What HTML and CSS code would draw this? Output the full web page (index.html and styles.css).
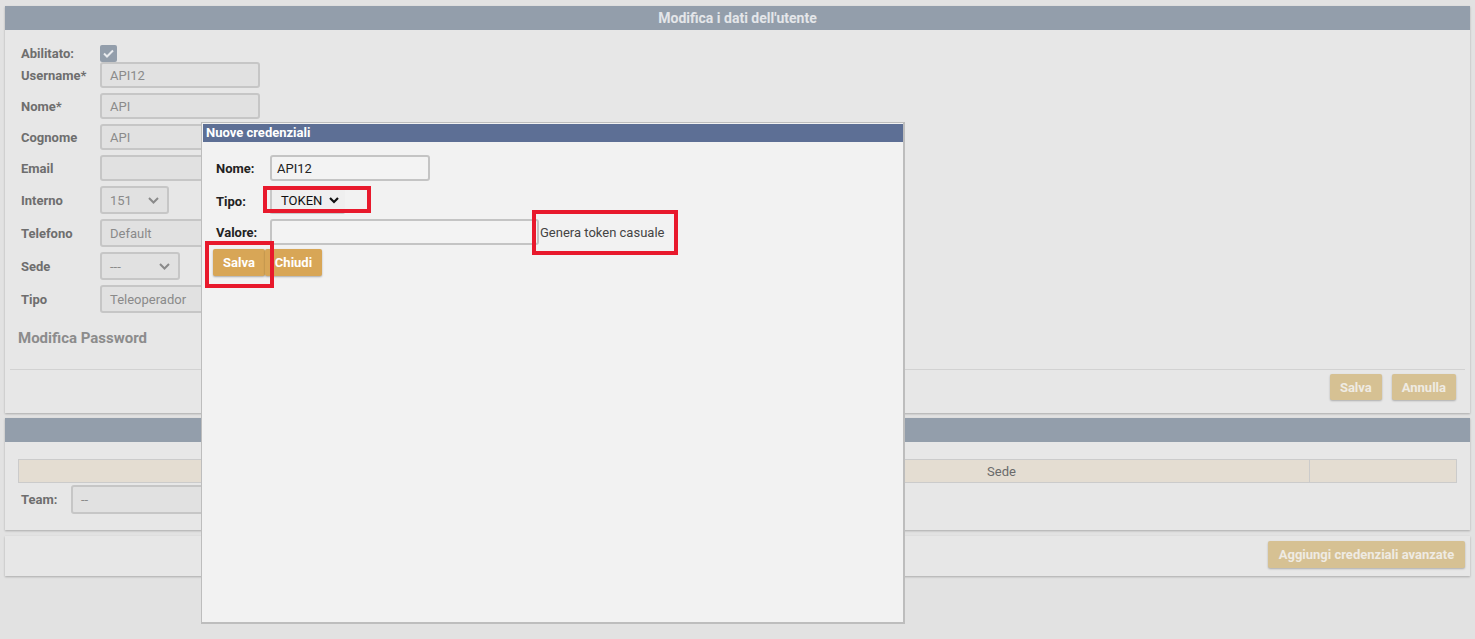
FILE: index.html
```html
<!DOCTYPE html>
<html lang="it">
<head>
  <meta charset="UTF-8">
  <title>Modifica utente</title>
  <link rel="stylesheet" href="styles.css">
</head>
<body>
  <div class="panel">
    <div class="panel-title">Modifica i dati dell'utente</div>
    <div class="user-form">
      <div class="row row-check">
        <label>Abilitato:</label>
        <span class="check">
          <svg width="11" height="9" viewBox="0 0 11 9"><path d="M1 4.5 L4 7.5 L10 1.5" fill="none" stroke="#e9ebee" stroke-width="2"/></svg>
        </span>
      </div>
      <div class="row"><label>Username*</label><div class="field w160">API12</div></div>
      <div class="row"><label>Nome*</label><div class="field w160">API</div></div>
      <div class="row"><label>Cognome</label><div class="field w160">API</div></div>
      <div class="row"><label>Email</label><div class="field w160"></div></div>
      <div class="row tall"><label>Interno</label>
        <div class="field select w69">151
          <svg class="chev" width="11" height="7" viewBox="0 0 11 7"><path d="M1 1 L5.5 5.5 L10 1" fill="none" stroke="#8a8a8a" stroke-width="2"/></svg>
        </div>
      </div>
      <div class="row tall"><label>Telefono</label><div class="field w160">Default</div></div>
      <div class="row tall"><label>Sede</label>
        <div class="field select w80">---
          <svg class="chev" width="11" height="7" viewBox="0 0 11 7"><path d="M1 1 L5.5 5.5 L10 1" fill="none" stroke="#8a8a8a" stroke-width="2"/></svg>
        </div>
      </div>
      <div class="row tall"><label>Tipo</label><div class="field w160">Teleoperador</div></div>
      <div class="subtitle">Modifica Password</div>
    </div>
    <div class="actions">
      <button class="btn-dim">Salva</button>
      <button class="btn-dim">Annulla</button>
    </div>
  </div>

  <div class="panel">
    <div class="panel-title"></div>
    <div class="team-box">
      <table class="grid">
        <tr><th class="c1"></th><th class="c2">Sede</th><th class="c3"></th></tr>
      </table>
      <div class="team-row">
        <label>Team:</label>
        <div class="field team-field">--</div>
      </div>
    </div>
  </div>

  <div class="panel panel-foot">
    <button class="btn-dim">Aggiungi credenziali avanzate</button>
  </div>

  <div class="modal">
    <div class="modal-title">Nuove credenziali</div>
    <div class="modal-body">
      <div class="mrow mrow-nome"><label>Nome:</label><div class="minput w159">API12</div></div>
      <div class="mrow mrow-tipo"><label>Tipo:</label>
        <div class="mselect">TOKEN
          <svg width="10" height="7" viewBox="0 0 10 7"><path d="M1 1 L5 5 L9 1" fill="none" stroke="#111" stroke-width="2.2"/></svg>
        </div>
      </div>
      <div class="mrow"><label>Valore:</label><div class="minput w268"></div><span class="gen">Genera token casuale</span></div>
      <div class="mbuttons">
        <button class="btn">Salva</button>
        <button class="btn">Chiudi</button>
      </div>
    </div>
    <div class="mark mark-tipo"></div>
    <div class="mark mark-gen"></div>
    <div class="mark mark-save"></div>
  </div>
</body>
</html>
```

FILE: styles.css
```css
* {
  box-sizing: border-box;
}

body {
  margin: 0;
  padding: 6px 5px 0;
  background-color: #e2e2e2;
  font-family: Roboto, "Liberation Sans", Arial, sans-serif;
  font-size: 13px;
  color: #6b6b6b;
  height: 639px;
  overflow: hidden;
  position: relative;
}

.panel {
  background-color: #e7e7e7;
  box-shadow: 0 1px 2px rgba(0, 0, 0, 0.25);
  margin-bottom: 5px;
}

.panel-title {
  height: 24px;
  line-height: 24px;
  background-color: #939eab;
  color: #e4e6e9;
  font-weight: bold;
  font-size: 14px;
  text-align: center;
}

.user-form {
  padding: 14px 0 0 16px;
}

.row {
  display: flex;
  align-items: center;
  margin-bottom: 5px;
}

.row label {
  width: 79px;
  font-weight: bold;
  color: #6e6e6e;
}

.row-check {
  height: 18px;
  margin-bottom: 0;
}

.check {
  width: 17px;
  height: 17px;
  border-radius: 2px;
  background-color: #939eab;
  display: flex;
  align-items: center;
  justify-content: center;
}

.field {
  height: 26px;
  border: 2px solid #c6c6c6;
  border-radius: 3px;
  background-color: #e1e1e1;
  color: #8a8a8a;
  padding: 0 8px;
  display: flex;
  align-items: center;
  font-size: 13px;
}

.tall .field {
  height: 28px;
}

.w160 { width: 160px; }
.w69 { width: 69px; }
.w80 { width: 80px; }

.select {
  justify-content: space-between;
}

.subtitle {
  margin: 16px 0 0 -3px;
  font-size: 15px;
  font-weight: bold;
  color: #8c8c8c;
  height: 18px;
}

.actions {
  margin: 22px 5px 0;
  border-top: 1px solid #d2d2d2;
  padding: 4px 9px 13px 0;
  display: flex;
  justify-content: flex-end;
  gap: 10px;
}

.btn-dim {
  height: 26px;
  padding: 0 10px;
  border: none;
  border-radius: 2px;
  background-color: #d6c193;
  color: #efebe3;
  font-family: inherit;
  font-weight: bold;
  font-size: 13px;
  box-shadow: 0 1px 2px rgba(0, 0, 0, 0.25);
}

.team-box {
  padding: 17px 13px 16px;
}

.grid {
  width: 100%;
  border-collapse: collapse;
  background-color: #e4ddd2;
}

.grid th {
  height: 23px;
  border: 1px solid #cbcbcb;
  font-weight: normal;
  color: #6a6a6a;
  padding: 0;
}

.grid .c1 { width: 675px; }
.grid .c2 { width: 616px; }

.team-row {
  display: flex;
  align-items: center;
  margin-top: 2px;
}

.team-row label {
  width: 53px;
  padding-left: 3px;
  font-weight: bold;
  color: #6e6e6e;
}

.team-field {
  width: 300px;
  height: 29px;
}

.panel-foot {
  display: flex;
  justify-content: flex-end;
  padding: 5px 5px 8px;
  margin-top: 6px;
}

.panel-foot .btn-dim {
  height: 27px;
  width: 197px;
  padding: 0;
}

/* dialog */
.modal {
  position: absolute;
  left: 201px;
  top: 122px;
  width: 704px;
  height: 502px;
  border: 1px solid #bdbdbd;
  border-right-width: 2px;
  border-bottom-width: 2px;
  padding: 1px 0 0 1px;
  background-color: #f2f2f2;
}

.modal-title {
  height: 18px;
  line-height: 18px;
  background-color: #5d6f95;
  color: #ffffff;
  font-weight: bold;
  font-size: 13px;
  padding-left: 3px;
}

.modal-body {
  padding: 13px 0 0 10px;
}

.mrow {
  display: flex;
  align-items: center;
  margin-bottom: 6px;
}

.mrow label {
  width: 57px;
  padding-left: 3px;
  font-weight: bold;
  color: #222;
}

.mrow-nome {
  margin-bottom: 7px;
}

.minput {
  height: 26px;
  border: 2px solid #c4c4c4;
  border-radius: 3px;
  background-color: #f3f3f3;
  color: #222;
  padding: 0 5px;
  display: flex;
  align-items: center;
}

.w159 { width: 160px; }
.w268 { width: 269px; }

.mrow-tipo {
  margin-bottom: 5px;
}

.mselect {
  width: 75px;
  height: 26px;
  border-left: 2px solid #c8c8c8;
  border-bottom: 2px solid #c8c8c8;
  border-radius: 2px;
  background-color: #efefef;
  color: #111;
  display: flex;
  align-items: center;
  gap: 7px;
  padding-left: 9px;
}

.gen {
  color: #444;
  margin-left: 1px;
}

.mbuttons {
  display: flex;
  gap: 0;
  margin-top: -2px;
}

.btn {
  height: 27px;
  padding: 0 10px;
  border: none;
  border-radius: 2px;
  background-color: #d8a656;
  color: #fff;
  font-family: inherit;
  font-weight: bold;
  font-size: 13px;
  box-shadow: 0 1px 2px rgba(0, 0, 0, 0.3);
}

.mark {
  position: absolute;
  border: 4px solid #e8192c;
}

.mark-tipo {
  left: 61px;
  top: 63px;
  width: 108px;
  height: 27px;
}

.mark-gen {
  left: 330px;
  top: 87px;
  width: 146px;
  height: 45px;
}

.mark-save {
  left: 3px;
  top: 118px;
  width: 69px;
  height: 47px;
}
```
